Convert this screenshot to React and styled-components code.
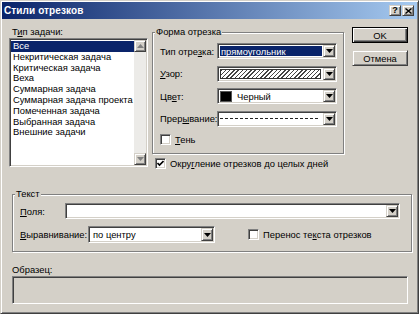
import React from 'react'
import styled, { createGlobalStyle, css } from 'styled-components'

const GlobalStyle = createGlobalStyle`
  html, body { margin: 0; padding: 0; background: #d4d0c8; }
  body {
    font-family: "Liberation Sans", Arial, sans-serif;
    font-size: 9.4px;
    color: #000;
  }
`

const raised = css`
  border: 1px solid;
  border-color: #d4d0c8 #404040 #404040 #d4d0c8;
  box-shadow: inset 1px 1px #fff, inset -1px -1px #808080;
`
const sunken = css`
  border: 1px solid;
  border-color: #808080 #fff #fff #808080;
  box-shadow: inset 1px 1px #404040, inset -1px -1px #d4d0c8;
`

const Window = styled.div`
  box-sizing: border-box;
  width: 419px;
  height: 314px;
  padding: 1px;
  background: #d4d0c8;
  ${raised};
  display: flex;
  flex-direction: column;
`
const TitleBar = styled.div`
  height: 17px;
  flex: none;
  display: flex;
  align-items: center;
  padding-left: 2px;
  background: linear-gradient(to right, #0a246a, #a6caf0);
`
const Title = styled.div`
  flex: 1;
  color: #fff;
  font-weight: bold;
  font-size: 10px;
  letter-spacing: 0.1px;
`
const Caps = styled.div`
  display: flex;
  gap: 1px;
  margin-right: 3px;
`
const CapBtn = styled.div`
  box-sizing: border-box;
  width: 12px;
  height: 11px;
  background: #d4d0c8;
  ${raised};
  display: flex;
  align-items: center;
  justify-content: center;
  font-weight: bold;
  font-size: 9px;
  line-height: 1;
`
const Body = styled.div`
  flex: 1;
  padding-top: 7px;
  display: flex;
  flex-direction: column;
`
const Top = styled.div`
  display: flex;
  align-items: flex-start;
`
const TaskCol = styled.div`
  margin-left: 7px;
  width: 139px;
`
const Label = styled.div`
  height: 12px;
  line-height: 12px;
  white-space: nowrap;
  margin-left: ${p => p.$ml || 0}px;
  margin-top: ${p => p.$mt || 0}px;
`
const ListBox = styled.div`
  box-sizing: border-box;
  height: 129px;
  background: #fff;
  padding: 1px;
  ${sunken};
  display: flex;
`
const Items = styled.div`
  flex: 1;
  padding-top: 1px;
`
const Item = styled.div`
  height: 10.8px;
  line-height: 10.8px;
  padding-left: 2px;
  white-space: nowrap;
  background: ${p => (p.$sel ? '#0a246a' : 'transparent')};
  color: ${p => (p.$sel ? '#fff' : '#000')};
`
const VScroll = styled.div`
  width: 12px;
  display: flex;
  flex-direction: column;
  background: #ecebe8;
`
const ScrollBtn = styled.div`
  box-sizing: border-box;
  height: 12px;
  background: #d4d0c8;
  ${raised};
  display: flex;
  align-items: center;
  justify-content: center;
`
const Track = styled.div`
  flex: 1;
`
const MidCol = styled.div`
  margin-left: 4px;
  width: 192px;
`
const Group = styled.fieldset`
  box-sizing: border-box;
  min-width: 0;
  margin: 0;
  padding: 0;
  height: ${p => p.$h}px;
  border: 1px solid #808080;
  box-shadow: inset 1px 1px #fff, 1px 1px #fff;
`
const Legend = styled.legend`
  margin-left: 2px;
  padding: 0 1px;
  height: 12px;
  line-height: 12px;
  background: #d4d0c8;
`
const GroupInner = styled.div`
  padding: ${p => p.$pad};
`
const FieldGrid = styled.div`
  display: grid;
  grid-template-columns: 57px 120px;
  row-gap: 6.5px;
  align-items: center;
`
const Combo = styled.div`
  box-sizing: border-box;
  width: ${p => p.$w}px;
  height: ${p => p.$h || 16}px;
  padding: 1px;
  background: #fff;
  ${sunken};
  display: flex;
`
const ComboValue = styled.div`
  flex: 1;
  margin: 1px;
  display: flex;
  align-items: center;
  white-space: nowrap;
  padding-left: ${p => p.$pl || 0}px;
  background: ${p => (p.$sel ? '#0a246a' : 'transparent')};
  color: ${p => (p.$sel ? '#fff' : '#000')};
`
const Hatch = styled.div`
  flex: 1;
  align-self: stretch;
  margin-right: 1px;
  border: 1px solid #333;
  background: repeating-linear-gradient(135deg, #444 0 1px, #fff 1px 3px);
`
const Swatch = styled.div`
  box-sizing: border-box;
  width: 12px;
  height: 11px;
  background: #000;
  border: 1px solid #555;
  margin-right: 5px;
`
const Dash = styled.div`
  flex: 1;
  height: 1px;
  margin-right: 2px;
  background: repeating-linear-gradient(90deg, #222 0 3px, transparent 3px 5px);
`
const DropBtn = styled.div`
  box-sizing: border-box;
  width: 12px;
  flex: none;
  background: #d4d0c8;
  ${raised};
  display: flex;
  align-items: center;
  justify-content: center;
`
const CheckRow = styled.div`
  display: flex;
  align-items: center;
  gap: 4px;
  height: 11px;
  margin-top: ${p => p.$mt || 0}px;
  margin-left: ${p => p.$ml || 0}px;
  white-space: nowrap;
`
const Box = styled.div`
  box-sizing: border-box;
  width: 11px;
  height: 11px;
  flex: none;
  background: #fff;
  ${sunken};
  display: flex;
  align-items: center;
  justify-content: center;
`
const BtnCol = styled.div`
  margin-left: 8px;
  margin-top: 1px;
  width: 56px;
  display: flex;
  flex-direction: column;
  gap: 7px;
`
const Button = styled.div`
  box-sizing: border-box;
  height: 16px;
  display: flex;
  align-items: center;
  justify-content: center;
  background: #d4d0c8;
  ${raised};
  ${p =>
    p.$default &&
    css`
      border: 1px solid #000;
      box-shadow: inset 1px 1px #fff, inset -1px -1px #404040, inset -2px -2px #808080;
    `}
`
const TextGroupWrap = styled.div`
  margin: 19px 5px 0 10px;
`
const Row = styled.div`
  display: flex;
  align-items: center;
  margin-top: ${p => p.$mt || 0}px;
`
const RowLabel = styled.div`
  width: ${p => p.$w}px;
  white-space: nowrap;
`
const Sample = styled.div`
  box-sizing: border-box;
  margin-left: 10px;
  width: 396px;
  height: 28px;
  ${sunken};
  background: #d4d0c8;
`

const Arrow = ({ up, color = '#000' }) => (
  <svg width="7" height="4" viewBox="0 0 7 4">
    <polygon points={up ? '3.5,0 7,4 0,4' : '0,0 7,0 3.5,4'} fill={color} />
  </svg>
)

const Tick = () => (
  <svg width="7" height="7" viewBox="0 0 7 7">
    <polyline points="0.5,3 2.5,5 6.5,1" fill="none" stroke="#000" strokeWidth="1.6" />
  </svg>
)

const CloseGlyph = () => (
  <svg width="7" height="6" viewBox="0 0 7 6">
    <path d="M0.5 0.5 L6.5 5.5 M6.5 0.5 L0.5 5.5" stroke="#000" strokeWidth="1.4" />
  </svg>
)

const tasks = [
  'Все',
  'Некритическая задача',
  'Критическая задача',
  'Веха',
  'Суммарная задача',
  'Суммарная задача проекта',
  'Помеченная задача',
  'Выбранная задача',
  'Внешние задачи',
]

const Drop = () => (
  <DropBtn>
    <Arrow />
  </DropBtn>
)

export default function App() {
  return (
    <>
      <GlobalStyle />
      <Window>
        <TitleBar>
          <Title>Стили отрезков</Title>
          <Caps>
            <CapBtn>?</CapBtn>
            <CapBtn>
              <CloseGlyph />
            </CapBtn>
          </Caps>
        </TitleBar>
        <Body>
          <Top>
            <TaskCol>
              <Label $ml={3}>
                Т<u>и</u>п задачи:
              </Label>
              <ListBox>
                <Items>
                  {tasks.map((t, i) => (
                    <Item key={t} $sel={i === 0}>
                      {t}
                    </Item>
                  ))}
                </Items>
                <VScroll>
                  <ScrollBtn>
                    <Arrow up color="#808080" />
                  </ScrollBtn>
                  <Track />
                  <ScrollBtn>
                    <Arrow color="#808080" />
                  </ScrollBtn>
                </VScroll>
              </ListBox>
            </TaskCol>

            <MidCol>
              <Group $h={128}>
                <Legend>Форма отрезка</Legend>
                <GroupInner $pad="5px 0 0 7px">
                  <FieldGrid>
                    <span>
                      Тип отре<u>з</u>ка:
                    </span>
                    <Combo $w={120}>
                      <ComboValue $sel $pl={1}>прямоугольник</ComboValue>
                      <Drop />
                    </Combo>
                    <span>
                      <u>У</u>зор:
                    </span>
                    <Combo $w={120}>
                      <ComboValue>
                        <Hatch />
                      </ComboValue>
                      <Drop />
                    </Combo>
                    <span>
                      Цв<u>е</u>т:
                    </span>
                    <Combo $w={120}>
                      <ComboValue>
                        <Swatch />
                        Черный
                      </ComboValue>
                      <Drop />
                    </Combo>
                    <span>
                      Прер<u>ы</u>вание:
                    </span>
                    <Combo $w={120}>
                      <ComboValue>
                        <Dash />
                      </ComboValue>
                      <Drop />
                    </Combo>
                  </FieldGrid>
                  <CheckRow $mt={7.5}>
                    <Box />
                    <span>
                      <u>Т</u>ень
                    </span>
                  </CheckRow>
                </GroupInner>
              </Group>
              <CheckRow $mt={4} $ml={3}>
                <Box>
                  <Tick />
                </Box>
                <span>
                  Окру<u>г</u>ление отрезков до целых дней
                </span>
              </CheckRow>
            </MidCol>

            <BtnCol>
              <Button $default>OK</Button>
              <Button>Отмена</Button>
            </BtnCol>
          </Top>

          <TextGroupWrap>
            <Group $h={64}>
              <Legend>Текст</Legend>
              <GroupInner $pad="3px 0 0 7px">
                <Row>
                  <RowLabel $w={45}>
                    <u>П</u>оля:
                  </RowLabel>
                  <Combo $w={335}>
                    <ComboValue />
                    <Drop />
                  </Combo>
                </Row>
                <Row $mt={7}>
                  <RowLabel $w={68}>
                    <u>В</u>ыравнивание:
                  </RowLabel>
                  <Combo $w={127} $h={17}>
                    <ComboValue $pl={2}>по центру</ComboValue>
                    <Drop />
                  </Combo>
                  <CheckRow $ml={33}>
                    <Box />
                    <span>
                      Перенос те<u>к</u>ста отрезков
                    </span>
                  </CheckRow>
                </Row>
              </GroupInner>
            </Group>
          </TextGroupWrap>

          <Label $ml={10} $mt={12}>
            Образец:
          </Label>
          <Sample />
        </Body>
      </Window>
    </>
  )
}
